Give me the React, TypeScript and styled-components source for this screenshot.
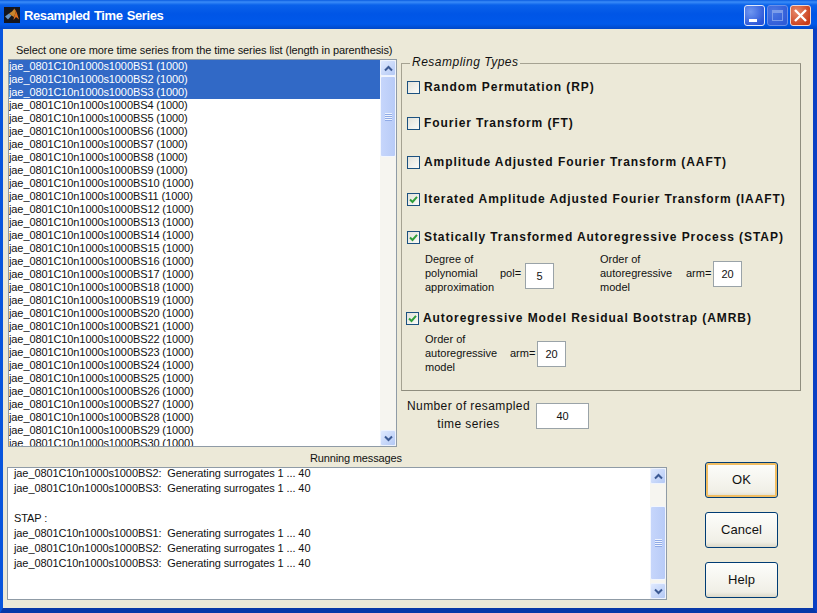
import React from "react";
import styled, { createGlobalStyle } from "styled-components";

const seriesNames = Array.from({ length: 30 }, (_, i) => `jae_0801C10n1000s1000BS${i + 1} (1000)`);

const messages = [
  "jae_0801C10n1000s1000BS2:  Generating surrogates 1 ... 40",
  "jae_0801C10n1000s1000BS3:  Generating surrogates 1 ... 40",
  "",
  "STAP :",
  "jae_0801C10n1000s1000BS1:  Generating surrogates 1 ... 40",
  "jae_0801C10n1000s1000BS2:  Generating surrogates 1 ... 40",
  "jae_0801C10n1000s1000BS3:  Generating surrogates 1 ... 40",
];

const MatlabLogo = () => (
  <svg width="16" height="16" viewBox="0 0 16 16">
    <rect width="16" height="16" fill="#15151c" />
    <polygon points="1,9.5 5,6.5 7.5,8.5 4,12.5" fill="#6b94bf" />
    <polygon points="5,6.5 8,4.5 10.5,1.5 11.5,6 10,10 7.5,8.5" fill="#c9862e" />
    <polygon points="10.5,1.5 12.5,5 15,12.5 12,10 9.5,13 10,10 11.5,6" fill="#e0701c" />
  </svg>
);

const Chevron = ({ up }: { up?: boolean }) => (
  <svg width="9" height="7" viewBox="0 0 9 7">
    <path
      d={up ? "M1 5.5 L4.5 2 L8 5.5" : "M1 1.5 L4.5 5 L8 1.5"}
      fill="none"
      stroke="#3c5a94"
      strokeWidth="2"
    />
  </svg>
);

const ScrollBar = ({ before, thumb }: { before: number; thumb: number }) => (
  <ScrollTrack>
    <ScrollButton>
      <Chevron up />
    </ScrollButton>
    <ScrollGap style={{ height: before }} />
    <ScrollThumb style={{ height: thumb }}>
      <Grip />
    </ScrollThumb>
    <ScrollGap style={{ flex: 1 }} />
    <ScrollButton>
      <Chevron />
    </ScrollButton>
  </ScrollTrack>
);

const CheckRow = ({ top, checked, label, outdent }: { top: number; checked?: boolean; label: string; outdent?: boolean }) => (
  <CheckLine $top={top} $outdent={outdent}>
    <CheckBox>
      {checked && (
        <svg width="9" height="9" viewBox="0 0 9 9">
          <path d="M1 4.5 L3.5 7 L8 1.8" fill="none" stroke="#2f9e3a" strokeWidth="2" />
        </svg>
      )}
    </CheckBox>
    <CheckLabel>{label}</CheckLabel>
  </CheckLine>
);

const App = () => {
  return (
    <Window>
      <GlobalStyle />
      <TitleBar>
        <MatlabLogo />
        <Title>Resampled Time Series</Title>
        <WindowButtons>
          <MinButton>
            <MinGlyph />
          </MinButton>
          <MaxButton>
            <MaxGlyph />
          </MaxButton>
          <CloseButton>
            <svg width="15" height="15" viewBox="0 0 15 15">
              <path d="M2 2 L13 13 M13 2 L2 13" stroke="#fff" strokeWidth="2.4" />
            </svg>
          </CloseButton>
        </WindowButtons>
      </TitleBar>
      <Client>
        <TopRow>
          <LeftColumn>
            <ListCaption>Select one ore more time series from the time series list (length in parenthesis)</ListCaption>
            <ListBox>
              <ListItems>
                {seriesNames.map((name, i) => (
                  <ListItem key={name} $selected={i < 3}>
                    {name}
                  </ListItem>
                ))}
              </ListItems>
              <ScrollBar before={0} thumb={81} />
            </ListBox>
          </LeftColumn>
          <RightColumn>
            <GroupBox>
              <Legend>Resampling Types</Legend>
              <CheckRow top={0} label="Random Permutation (RP)" />
              <CheckRow top={22} label="Fourier Transform (FT)" />
              <CheckRow top={25} label="Amplitude Adjusted Fourier Transform (AAFT)" />
              <CheckRow top={23} checked label="Iterated Amplitude Adjusted Fourier Transform (IAAFT)" />
              <CheckRow top={24} checked label="Statically Transformed Autoregressive Process (STAP)" />
              <ParamRow $top={8}>
                <ParamBlock>
                  <ParamText $width={75}>Degree of polynomial approximation</ParamText>
                  <ParamName $width={25}>pol=</ParamName>
                  <ParamInput $nudge={11}>5</ParamInput>
                </ParamBlock>
                <ParamBlock>
                  <ParamText $width={86}>Order of autoregressive model</ParamText>
                  <ParamName $width={27}>arm=</ParamName>
                  <ParamInput $nudge={9}>20</ParamInput>
                </ParamBlock>
              </ParamRow>
              <CheckRow top={17} checked outdent label="Autoregressive Model Residual Bootstrap (AMRB)" />
              <ParamRow $top={7}>
                <ParamBlock>
                  <ParamText $width={85}>Order of autoregressive model</ParamText>
                  <ParamName $width={27}>arm=</ParamName>
                  <ParamInput $nudge={9}>20</ParamInput>
                </ParamBlock>
              </ParamRow>
            </GroupBox>
            <CountRow>
              <CountLabel>
                Number of resampled
                <br />
                time series
              </CountLabel>
              <CountInput>40</CountInput>
            </CountRow>
          </RightColumn>
        </TopRow>
        <BottomRow>
          <MessageColumn>
            <MessageCaption>Running messages</MessageCaption>
            <MessageBox>
              <MessageLines>
                {messages.map((line, i) => (
                  <MessageLine key={i}>{line}</MessageLine>
                ))}
              </MessageLines>
              <ScrollBar before={22} thumb={74} />
            </MessageBox>
          </MessageColumn>
          <ButtonColumn>
            <DialogButton $focused>OK</DialogButton>
            <DialogButton>Cancel</DialogButton>
            <DialogButton>Help</DialogButton>
          </ButtonColumn>
        </BottomRow>
      </Client>
    </Window>
  );
};

export default App;

const GlobalStyle = createGlobalStyle`
  html, body {
    margin: 0;
    padding: 0;
    background: #ece9d8;
  }
`;

const Window = styled.div`
  width: 817px;
  height: 613px;
  display: flex;
  flex-direction: column;
  overflow: hidden;
  font-family: "Liberation Sans", Arial, sans-serif;
  color: #111;
`;

const TitleBar = styled.div`
  height: 29px;
  flex: none;
  box-sizing: border-box;
  display: flex;
  align-items: center;
  padding: 0 6px 0 4px;
  background: linear-gradient(
    180deg,
    #0a5ce0 0,
    #3a8cf8 2px,
    #0a62ea 5px,
    #0055e6 14px,
    #0059ea 24px,
    #0048c8 29px
  );
`;

const Title = styled.span`
  margin-left: 4px;
  padding-top: 1px;
  font-size: 13px;
  font-weight: bold;
  color: #fff;
  letter-spacing: -0.4px;
  word-spacing: 1px;
`;

const WindowButtons = styled.div`
  margin-left: auto;
  display: flex;
  gap: 2px;
  padding-top: 1px;
`;

const MinButton = styled.div`
  width: 21px;
  height: 21px;
  box-sizing: border-box;
  border: 1px solid #dfe8fb;
  border-radius: 3px;
  background: radial-gradient(circle at 30% 30%, #6f97f0, #2a55d8 80%);
  display: flex;
  align-items: flex-end;
  padding: 0 0 3px 4px;
`;

const MinGlyph = styled.div`
  width: 8px;
  height: 3px;
  background: #fff;
`;

const MaxButton = styled(MinButton)`
  border-color: #6a90e8;
  background: radial-gradient(circle at 30% 30%, #4d78e2, #2f5bd8 80%);
  padding: 4px;
  align-items: stretch;
`;

const MaxGlyph = styled.div`
  flex: 1;
  box-sizing: border-box;
  border: 1px solid #7c9cea;
  border-top-width: 3px;
`;

const CloseButton = styled.div`
  width: 21px;
  height: 21px;
  box-sizing: border-box;
  border: 1px solid #f0d8d0;
  border-radius: 3px;
  background: radial-gradient(circle at 30% 30%, #e88a6c, #c83c18 80%);
  display: flex;
  align-items: center;
  justify-content: center;
`;

const Client = styled.div`
  flex: 1;
  min-height: 0;
  box-sizing: border-box;
  background: #ece9d8;
  border-left: 3px solid #0855dd;
  border-right: 4px solid #0a3fc4;
  border-bottom: 5px solid #0838a8;
  display: flex;
  flex-direction: column;
`;

const TopRow = styled.div`
  display: flex;
  height: 418px;
  flex: none;
`;

const LeftColumn = styled.div`
  width: 394px;
  flex: none;
  box-sizing: border-box;
  padding: 14px 0 0 5px;
`;

const ListCaption = styled.div`
  height: 16px;
  line-height: 14px;
  padding-left: 8px;
  font-size: 11px;
  letter-spacing: -0.085px;
  white-space: nowrap;
`;

const ListBox = styled.div`
  width: 389px;
  height: 388px;
  box-sizing: border-box;
  border: 1px solid #8f9ba6;
  background: #fff;
  display: flex;
`;

const ListItems = styled.div`
  flex: 1;
  overflow: hidden;
`;

const ListItem = styled.div<{ $selected?: boolean }>`
  height: 13px;
  line-height: 13px;
  font-size: 11px;
  letter-spacing: -0.1px;
  white-space: nowrap;
  color: ${({ $selected }) => ($selected ? "#fff" : "#111")};
  background: ${({ $selected }) => ($selected ? "#3169c6" : "transparent")};
`;

const ScrollTrack = styled.div`
  width: 16px;
  flex: none;
  display: flex;
  flex-direction: column;
  background: #f6f5f0;
`;

const ScrollButton = styled.div`
  height: 16px;
  flex: none;
  box-sizing: border-box;
  border: 1px solid #eef3fe;
  border-radius: 2px;
  background: linear-gradient(135deg, #dfe9fe, #b4c9f5);
  display: flex;
  align-items: center;
  justify-content: center;
`;

const ScrollGap = styled.div`
  flex: none;
`;

const ScrollThumb = styled.div`
  flex: none;
  box-sizing: border-box;
  border: 1px solid #f2f6fe;
  border-radius: 2px;
  background: linear-gradient(90deg, #c6d6fb, #b8cbf7);
  display: flex;
  align-items: center;
  justify-content: center;
`;

const Grip = styled.div`
  width: 7px;
  height: 8px;
  background: repeating-linear-gradient(180deg, #eef3fe 0 1px, #8faae6 1px 2px);
`;

const RightColumn = styled.div`
  flex: 1;
  box-sizing: border-box;
  padding: 34px 12px 0 4px;
`;

const GroupBox = styled.div`
  position: relative;
  height: 328px;
  box-sizing: border-box;
  border: 1px solid #a5a292;
  border-right-color: #8f8d7e;
  border-bottom-color: #8f8d7e;
  padding: 16px 0 0 5px;
`;

const Legend = styled.span`
  position: absolute;
  top: -9px;
  left: 8px;
  padding: 0 2px;
  background: #ece9d8;
  font-size: 12px;
  font-style: italic;
  line-height: 14px;
  letter-spacing: 0.5px;
`;

const CheckLine = styled.div<{ $top: number; $outdent?: boolean }>`
  display: flex;
  align-items: center;
  height: 14px;
  margin-top: ${({ $top }) => $top}px;
  margin-left: ${({ $outdent }) => ($outdent ? -1 : 0)}px;
  gap: 4px;
`;

const CheckBox = styled.div`
  width: 13px;
  height: 13px;
  flex: none;
  box-sizing: border-box;
  border: 1px solid #1c5180;
  background: linear-gradient(135deg, #e2e2da, #fbfbf8);
  display: flex;
  align-items: center;
  justify-content: center;
`;

const CheckLabel = styled.span`
  font-size: 12px;
  font-weight: bold;
  letter-spacing: 0.93px;
  white-space: nowrap;
`;

const ParamRow = styled.div<{ $top: number }>`
  display: flex;
  gap: 46px;
  margin: ${({ $top }) => $top}px 0 0 18px;
`;

const ParamBlock = styled.div`
  display: flex;
  align-items: flex-start;
`;

const ParamText = styled.div<{ $width: number }>`
  width: ${({ $width }) => $width}px;
  font-size: 11px;
  line-height: 14px;
`;

const ParamName = styled.div<{ $width: number }>`
  width: ${({ $width }) => $width}px;
  font-size: 11px;
  line-height: 14px;
  padding-top: 14px;
`;

const ParamInput = styled.div<{ $nudge: number }>`
  width: 29px;
  height: 26px;
  box-sizing: border-box;
  margin-top: ${({ $nudge }) => $nudge}px;
  border: 1px solid #9aa3a8;
  background: #fff;
  font-size: 11px;
  line-height: 24px;
  text-align: center;
`;

const CountRow = styled.div`
  display: flex;
  align-items: flex-start;
  margin-top: 6px;
  padding-left: 6px;
  gap: 6px;
`;

const CountLabel = styled.div`
  width: 123px;
  font-size: 12px;
  line-height: 18px;
  letter-spacing: 0.4px;
  text-align: center;
  white-space: nowrap;
`;

const CountInput = styled.div`
  width: 53px;
  height: 26px;
  margin-top: 6px;
  box-sizing: border-box;
  border: 1px solid #9aa3a8;
  background: #fff;
  font-size: 11px;
  line-height: 24px;
  text-align: center;
`;

const BottomRow = styled.div`
  flex: 1;
  display: flex;
`;

const MessageColumn = styled.div`
  width: 664px;
  flex: none;
  box-sizing: border-box;
  padding-left: 4px;
`;

const MessageCaption = styled.div`
  height: 20px;
  padding-top: 4px;
  box-sizing: border-box;
  padding-left: 303px;
  font-size: 11px;
  line-height: 14px;
  letter-spacing: -0.15px;
  white-space: nowrap;
`;

const MessageBox = styled.div`
  height: 133px;
  box-sizing: border-box;
  border: 1px solid #8f9ba6;
  background: #fff;
  display: flex;
`;

const MessageLines = styled.div`
  flex: 1;
  padding-left: 6px;
`;

const MessageLine = styled.div`
  height: 15px;
  line-height: 10px;
  font-size: 11px;
  letter-spacing: -0.1px;
  white-space: pre;
`;

const ButtonColumn = styled.div`
  display: flex;
  flex-direction: column;
  gap: 14px;
  padding: 15px 0 0 38px;
`;

const DialogButton = styled.div<{ $focused?: boolean }>`
  width: 73px;
  height: 36px;
  box-sizing: border-box;
  border: 1px solid #003c74;
  border-radius: 3px;
  background: linear-gradient(180deg, #fdfdfb, #f0efe6 85%, #dcd8c8);
  box-shadow: ${({ $focused }) => ($focused ? "inset 0 0 0 2px #f0bd62" : "none")};
  font-size: 13px;
  line-height: 34px;
  letter-spacing: 0.1px;
  text-align: center;
`;
